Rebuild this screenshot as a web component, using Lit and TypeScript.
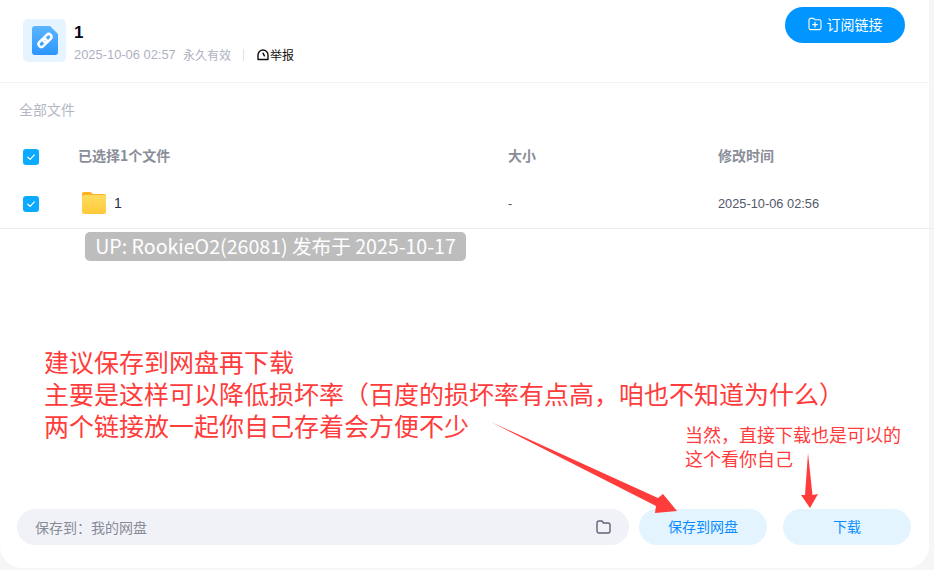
import { LitElement, html, css } from "lit";
import { customElement } from "lit/decorators.js";

const LP = "\uFF08";
const RP = "\uFF09";
const COMMA = "\uFF0C";
const COLON = "\uFF1A";

const check = html`<svg class="tick" viewBox="0 0 16 16" width="16" height="16"><path d="M4.8 8.2l2.3 2.2 4.2-4.5" fill="none" stroke="#fff" stroke-width="1.2" stroke-linecap="round" stroke-linejoin="round"/></svg>`;

@customElement("app-root")
export class AppRoot extends LitElement {
  static styles = css`
    :host { display: block; position: relative; width: 934px; height: 570px; overflow: hidden; background: #f6f6f8;
      font-family: "Noto Sans CJK SC", "Liberation Sans", sans-serif; }
    .card { width: 929px; height: 568px; background: #fff; border-radius: 0 0 22px 22px; display: flex; flex-direction: column; }
    .head { height: 83px; flex: none; box-sizing: border-box; border-bottom: 1px solid #f1f1f7; padding: 19px 24px 0 23px; display: flex; justify-content: space-between; align-items: flex-start; }
    .info { display: flex; gap: 8px; }
    .tile { width: 43px; height: 43px; border-radius: 5px; background: #e5f4ff; display: flex; align-items: center; justify-content: center; }
    .title { font: 700 17px/20px "Liberation Sans", sans-serif; color: #05051a; margin-top: 4px; }
    .meta { display: flex; align-items: center; margin-top: 4px; height: 16px; font-size: 12px; line-height: 16px; color: #aeb1bf; white-space: nowrap; }
    .date { font-family: "Liberation Sans", sans-serif; font-size: 12.9px; width: 109px; }
    .sep { width: 1px; height: 12px; background: #dfe1e6; margin: 0 13px 0 12px; }
    .report { display: flex; align-items: center; color: #111; gap: 1px; }
    .sub { margin-top: -12px; width: 120px; height: 36px; box-sizing: border-box; border: 0; border-radius: 18px; background: #0095ff; color: #fff; font: 400 14px/32px "Noto Sans CJK SC", sans-serif; display: flex; align-items: center; justify-content: center; gap: 5px; padding: 0 0 2px; }
    .crumb { font-size: 14px; line-height: 20px; color: #b4b7c3; padding: 16px 0 0 19px; }
    .row { display: grid; grid-template-columns: 55px 430px 210px 1fr; align-items: center; padding-left: 23px; }
    .row.top { height: 44px; margin-top: 15px; font-size: 14px; font-weight: 700; color: #8a8e99; }
    .row.top > span:not(.box) { padding-bottom: 2px; }
    .row.item { height: 51px; border-bottom: 1px solid #ececef; box-sizing: border-box; margin-right: -5px; font-size: 12px; color: #53586a; }
    .box { width: 16px; height: 16px; margin-top: 2px; border-radius: 3px; background: #09aaff; display: block; }
    .tick { display: block; }
    .name { display: flex; align-items: center; gap: 8px; padding-left: 4px; color: #2c2c4a; font: 14px "Liberation Sans", sans-serif; }
    .time { font-family: "Liberation Sans", sans-serif; font-size: 12.8px; color: #53586a; }
    .foot { margin-top: auto; margin-bottom: 23px; padding: 0 18px 0 17px; display: flex; gap: 10px; align-items: center; }
    .path { flex: none; width: 612px; height: 36px; box-sizing: border-box; border-radius: 18px; background: #f1f2f7; padding: 0 18px; display: flex; align-items: center; justify-content: space-between; font-size: 14px; color: #868b99; }
    .btn { flex: none; width: 128px; height: 36px; border: 0; border-radius: 18px; background: #e3f4ff; color: #0a8cff; font: 14px/32px "Noto Sans CJK SC", sans-serif; padding: 0 0 3px; }
    .btn + .btn { margin-left: 6px; }
    .stamp { position: absolute; left: 85px; top: 232px; width: 381px; height: 29px; box-sizing: border-box; border-radius: 5px; background: #bdbdbd; color: #fff; font-size: 19.6px; line-height: 28px; text-align: center; white-space: nowrap; }
    .note { position: absolute; color: #ff3c3c; white-space: nowrap; }
    .n1 { left: 44px; top: 345px; font-size: 25px; line-height: 32px; }
    .n2 { left: 685px; top: 422px; font-size: 18px; line-height: 24px; }
    .arrows { position: absolute; left: 0; top: 0; pointer-events: none; }
  `;

  render() {
    return html`
      <div class="card">
        <header class="head">
          <div class="info">
            <div class="tile">
              <svg width="26" height="29" viewBox="0 0 26 29">
                <defs><linearGradient id="fg" x1="0" y1="0" x2="0" y2="1"><stop offset="0" stop-color="#5cb6ff"/><stop offset="1" stop-color="#2b96ff"/></linearGradient></defs>
                <path d="M3 0h15l8 8v18a3 3 0 0 1-3 3H3a3 3 0 0 1-3-3V3a3 3 0 0 1 3-3z" fill="url(#fg)"/>
                <g fill="none" stroke="#fff" stroke-width="2.4" stroke-linecap="round" transform="rotate(-45 13 14.5)">
                  <rect x="5" y="11.7" width="9.5" height="5.6" rx="2.8"/>
                  <rect x="11.5" y="11.7" width="9.5" height="5.6" rx="2.8"/>
                </g>
              </svg>
            </div>
            <div>
              <div class="title">1</div>
              <div class="meta">
                <span class="date">2025-10-06 02:57</span><span>永久有效</span><i class="sep"></i>
                <span class="report">
                  <svg width="12" height="12" viewBox="0 0 12 12"><path d="M1 10.5V6a5 5 0 0 1 10 0v4.5z" fill="none" stroke="#111" stroke-width="1.4" stroke-linejoin="round"/><path d="M6 4.2l1.4 2.6" stroke="#111" stroke-width="1.5" stroke-linecap="round"/></svg>
                  举报
                </span>
              </div>
            </div>
          </div>
          <button class="sub">
            <svg width="14" height="14" viewBox="0 0 14 14"><path d="M1 3a1.6 1.6 0 0 1 1.6-1.6h3l1.400 1.400h4.400A1.600 1.600 0 0 1 13 4.400v6.600a1.600 1.600 0 0 1-1.600 1.600H2.600A1.600 1.600 0 0 1 1 11z" fill="none" stroke="#fff" stroke-width="1.1"/><path d="M7 5.3v4.6M4.7 7.6h4.6" stroke="#fff" stroke-width="1.2" stroke-linecap="round"/></svg>
            订阅链接
          </button>
        </header>
        <div class="crumb">全部文件</div>
        <div class="row top">
          <span class="box">${check}</span><span>已选择1个文件</span><span>大小</span><span>修改时间</span>
        </div>
        <div class="row item">
          <span class="box">${check}</span>
          <span class="name">
            <svg width="24" height="22" viewBox="0 0 24 22">
              <defs><linearGradient id="fo" x1="0" y1="0" x2="0" y2="1"><stop offset="0" stop-color="#ffdc5e"/><stop offset="1" stop-color="#ffc93a"/></linearGradient></defs>
              <path d="M2 0h6.500l2.500 2h11a2 2 0 0 1 2 2v4H0V2a2 2 0 0 1 2-2z" fill="#fdb120"/>
              <rect x="0" y="3" width="24" height="19" rx="2" fill="url(#fo)"/>
            </svg>
            1
          </span>
          <span class="time">-</span><span class="time">2025-10-06 02:56</span>
        </div>
        <footer class="foot">
          <div class="path">
            <span>保存到${COLON}我的网盘</span>
            <svg width="15" height="14" viewBox="0 0 15 14"><path d="M1 3a2 2 0 0 1 2-2h3l1.500 2H12a2 2 0 0 1 2 2v6a2 2 0 0 1-2 2H3a2 2 0 0 1-2-2z" fill="none" stroke="#5d6475" stroke-width="1.4" stroke-linejoin="round"/></svg>
          </div>
          <button class="btn">保存到网盘</button>
          <button class="btn">下载</button>
        </footer>
      </div>
      <div class="stamp">UP: RookieO2(26081) 发布于 2025-10-17</div>
      <div class="note n1">建议保存到网盘再下载<br>主要是这样可以降低损坏率${LP}百度的损坏率有点高${COMMA}咱也不知道为什么${RP}<br>两个链接放一起你自己存着会方便不少</div>
      <div class="note n2">当然${COMMA}直接下载也是可以的<br>这个看你自己</div>
      <svg class="arrows" width="934" height="570" viewBox="0 0 934 570">
        <path d="M491 422L658 498 663 494 677 511 655 513 656 506z" fill="#ff3c3c"/>
        <path d="M808 453L812.500 495 818 494 810 508 801 495 805 495z" fill="#ff3c3c"/>
      </svg>
    `;
  }
}
